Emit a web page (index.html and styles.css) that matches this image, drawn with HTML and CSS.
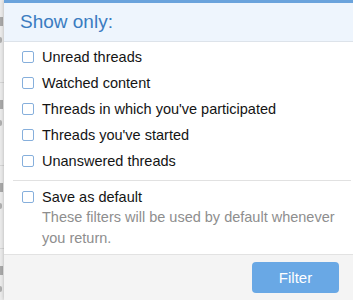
FILE: index.html
```html
<!DOCTYPE html>
<html lang="en">
<head>
    <meta charset="UTF-8">
    <meta name="viewport" content="width=device-width, initial-scale=1.0">
    <title>Show only</title>
    <link rel="stylesheet" href="styles.css">
</head>
<body>
    <div class="page-list">
        <div class="page-row"><span class="mark"></span><span class="tail"></span></div>
        <div class="page-row"><span class="mark"></span><span class="tail"></span></div>
        <div class="page-row"><span class="mark"></span><span class="tail"></span></div>
        <div class="page-row"><span class="mark"></span><span class="tail"></span></div>
        <div class="page-row"><span class="mark"></span></div>
    </div>

    <div class="menu">
        <h3 class="menu-header">Show only:</h3>
        <form class="menu-form">
            <ul class="check-list">
                <li><label><span class="box"></span>Unread threads</label></li>
                <li><label><span class="box"></span>Watched content</label></li>
                <li><label><span class="box"></span>Threads in which you've participated</label></li>
                <li><label><span class="box"></span>Threads you've started</label></li>
                <li><label><span class="box"></span>Unanswered threads</label></li>
            </ul>
            <div class="separator"></div>
            <div class="save-default">
                <label><span class="box"></span>Save as default</label>
                <p class="hint">These filters will be used by default whenever you return.</p>
            </div>
            <div class="menu-footer">
                <button type="submit" class="button">Filter</button>
            </div>
        </form>
    </div>
</body>
</html>
```

FILE: styles.css
```css
html, body {
    margin: 0;
    padding: 0;
    height: 300px;
    overflow: hidden;
}

body {
    font-family: "Liberation Sans", Arial, sans-serif;
    background-color: #ececec;
    position: relative;
}

/* page behind the menu, only its edge shows */
.page-list {
    width: 40px;
    height: 300px;
    overflow: hidden;
}

.page-row {
    height: 66px;
    border-bottom: 1px solid #d6d6d6;
    box-sizing: border-box;
}

.mark {
    display: block;
    width: 3px;
    height: 9px;
    margin-top: 17px;
    background: #a9a9a9;
}

.tail {
    display: block;
    width: 2px;
    height: 6px;
    margin-top: 11px;
    border-radius: 0 2px 2px 0;
    background: #b0b0b0;
}

.menu {
    position: absolute;
    top: 0;
    left: 4px;
    width: 356px;
    bottom: 0;
    background: #fff;
    border-top: 3px solid #6aa3dc;
    box-shadow: 0 0 4px rgba(0, 0, 0, 0.25);
    overflow: hidden;
}

.menu-header {
    margin: 0;
    height: 38px;
    padding-left: 16px;
    line-height: 38px;
    font-size: 19px;
    font-weight: normal;
    color: #3b7cc1;
    background: #eef5fd;
    border-bottom: 1px solid #dde3ea;
}

.check-list {
    list-style: none;
    margin: 0;
    padding: 2px 0 0 0;
}

.check-list li {
    height: 26px;
}

label {
    display: flex;
    align-items: center;
    height: 26px;
    padding-left: 18px;
    font-size: 14.5px;
    color: #141414;
}

.box {
    width: 10px;
    height: 10px;
    border: 1px solid #86afdc;
    border-radius: 2px;
    background: #fff;
    margin-right: 8px;
    flex-shrink: 0;
}

.separator {
    margin: 6px 9px 0 9px;
    border-top: 1px solid #e1e1e1;
}

.save-default {
    padding-top: 6px;
    padding-bottom: 5px;
}

.save-default label {
    height: 20px;
}

.hint {
    margin: 0;
    padding: 0 14px 0 38px;
    font-size: 14.5px;
    line-height: 21px;
    color: #8e8e8e;
}

.menu-footer {
    display: flex;
    justify-content: flex-end;
    padding: 7px 21px 0 0;
    height: 60px;
    background: #f4f4f4;
    border-top: 1px solid #e2e2e2;
}

.button {
    width: 87px;
    height: 31px;
    border: none;
    border-radius: 4px;
    background: #69a8e5;
    color: #fff;
    font-family: "Liberation Sans", Arial, sans-serif;
    font-size: 15px;
    cursor: pointer;
}
```
